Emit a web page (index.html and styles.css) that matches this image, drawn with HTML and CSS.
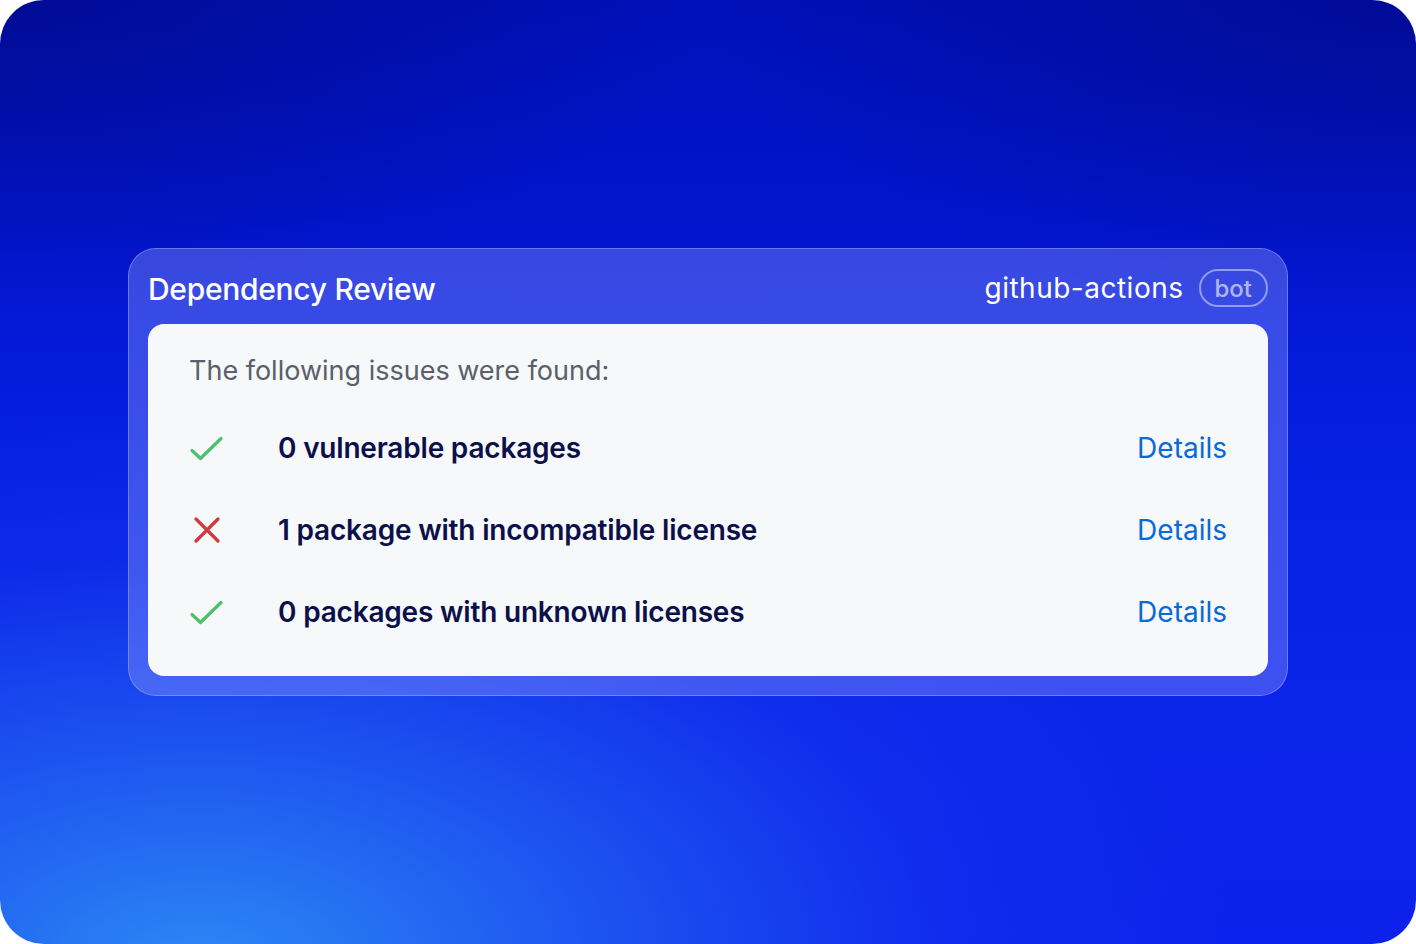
FILE: index.html
```html
<!DOCTYPE html>
<html lang="en">
<head>
<meta charset="utf-8">
<link rel="stylesheet" href="styles.css">
</head>
<body>
<div class="stage">
  <div class="card">
    <div class="card-head">
      <div class="title">Dependency Review</div>
      <div class="author">
        <span class="author-name">github-actions</span>
        <span class="badge">bot</span>
      </div>
    </div>
    <div class="panel">
      <div class="intro">The following issues were found:</div>
      <div class="row">
        <span class="icon">
          <svg width="36" height="36" viewBox="0 0 36 36"><path d="M3 19.5 L11.5 27.5 L32 7.5" fill="none" stroke="#4ac26b" stroke-width="3.2" stroke-linecap="round" stroke-linejoin="round"/></svg>
        </span>
        <span class="label">0 vulnerable packages</span>
        <a class="details">Details</a>
      </div>
      <div class="row">
        <span class="icon">
          <svg width="36" height="36" viewBox="0 0 36 36"><path d="M7 6 L29 28 M29 6 L7 28" fill="none" stroke="#d1383f" stroke-width="3.2" stroke-linecap="round"/></svg>
        </span>
        <span class="label">1 package with incompatible license</span>
        <a class="details">Details</a>
      </div>
      <div class="row">
        <span class="icon">
          <svg width="36" height="36" viewBox="0 0 36 36"><path d="M3 19.5 L11.5 27.5 L32 7.5" fill="none" stroke="#4ac26b" stroke-width="3.2" stroke-linecap="round" stroke-linejoin="round"/></svg>
        </span>
        <span class="label">0 packages with unknown licenses</span>
        <a class="details">Details</a>
      </div>
    </div>
  </div>
</div>
</body>
</html>
```
FILE: styles.css
```css
html, body {
  margin: 0;
  padding: 0;
  background: #ffffff;
}
body {
  font-family: Inter, "Noto Sans", "Liberation Sans", sans-serif;
}
.stage {
  width: 1416px;
  height: 944px;
  border-radius: 44px;
  overflow: hidden;
  box-sizing: border-box;
  padding-top: 248px;
  padding-left: 128px;
  background:
    radial-gradient(ellipse 700px 320px at 0% 0%, rgba(0, 8, 120, 0.55) 0%, rgba(0, 8, 120, 0) 100%),
    radial-gradient(ellipse 700px 320px at 100% 0%, rgba(0, 8, 120, 0.55) 0%, rgba(0, 8, 120, 0) 100%),
    radial-gradient(ellipse 1150px 620px at 14% 102%, rgba(44, 136, 244, 1) 0%, rgba(36, 104, 242, 0.7) 35%, rgba(28, 72, 240, 0.25) 65%, rgba(20, 50, 240, 0) 90%),
    linear-gradient(180deg, #0010b8 0%, #0216d0 25%, #0620e2 50%, #0b24ea 75%, #0c22ec 100%);
}
.card {
  width: 1160px;
  box-sizing: border-box;
  border-radius: 28px;
  background: rgba(145, 155, 255, 0.38);
  border: 1.5px solid rgba(170, 180, 255, 0.45);
  padding: 0 19px 19px 19px;
}
.card-head {
  height: 75px;
  display: flex;
  align-items: center;
  justify-content: space-between;
}
.title {
  color: #ffffff;
  font-size: 30px;
  font-weight: 500;
  letter-spacing: -0.3px;
  padding-top: 5px;
}
.author {
  display: flex;
  align-items: center;
  gap: 15px;
  padding-top: 3px;
}
.author-name {
  color: #ffffff;
  font-size: 28px;
  font-weight: 400;
  letter-spacing: 0.5px;
}
.badge {
  display: inline-flex;
  align-items: center;
  height: 38px;
  box-sizing: border-box;
  padding: 0 14px;
  border: 2px solid rgba(255, 255, 255, 0.45);
  border-radius: 20px;
  color: rgba(255, 255, 255, 0.62);
  font-size: 24px;
  font-weight: 500;
}
.panel {
  background: #f6f8fa;
  border-radius: 16px;
  padding: 27px 41px 23px 41px;
}
.intro {
  color: #59606a;
  font-size: 27px;
  line-height: 40px;
  margin-bottom: 16px;
}
.row {
  height: 82px;
  display: flex;
  align-items: center;
}
.icon {
  width: 89px;
  display: flex;
  align-items: center;
  padding-top: 2px;
}
.icon svg {
  display: block;
}
.label {
  flex: 1;
  color: #0c1049;
  font-size: 28px;
  font-weight: 600;
  letter-spacing: -0.2px;
}
.details {
  color: #0969da;
  font-size: 28px;
  font-weight: 400;
}
```
